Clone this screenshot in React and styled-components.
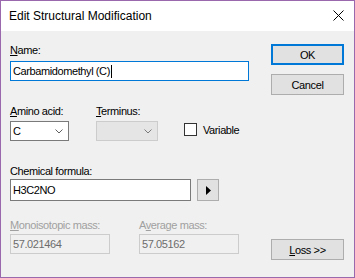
import React from "react";
import styled, { createGlobalStyle } from "styled-components";

const Global = createGlobalStyle`
  html, body { margin: 0; padding: 0; background: #ffffff; }
  * { box-sizing: border-box; }
`;

const Window = styled.div`
  width: 355px;
  height: 278px;
  border: 1px solid #9a68ad;
  display: flex;
  flex-direction: column;
  font-family: "Liberation Sans", Arial, sans-serif;
  font-size: 11px;
  letter-spacing: -0.4px;
  color: #000;
  overflow: hidden;
`;

const TitleBar = styled.div`
  height: 30px;
  flex: none;
  background: #ffffff;
  display: flex;
  align-items: center;
  justify-content: space-between;
  padding: 0 10px 1px 8px;
`;

const Title = styled.span`
  font-size: 12px;
  letter-spacing: 0;
  color: #000;
`;

const Body = styled.div`
  flex: 1;
  background: #f0f0f0;
  display: flex;
  padding: 0 10px 17px 9px;
`;

const Form = styled.div`
  width: 239px;
  display: flex;
  flex-direction: column;
`;

const Side = styled.div`
  margin-left: auto;
  width: 73px;
  display: flex;
  flex-direction: column;
  padding-top: 13px;
`;

const Label = styled.div`
  line-height: 15px;
  height: 15px;
  white-space: nowrap;
  margin-top: ${(p) => p.$top || 0}px;
  margin-bottom: ${(p) => p.$bottom || 0}px;
  color: ${(p) => (p.$disabled ? "#a0a0a0" : "#000")};
`;

const TextBox = styled.div`
  width: ${(p) => p.$w}px;
  height: ${(p) => p.$h || 20}px;
  border: 1px solid ${(p) => (p.$focus ? "#0078d7" : p.$disabled ? "#cccccc" : "#7a7a7a")};
  background: ${(p) => (p.$disabled ? "#f0f0f0" : "#ffffff")};
  color: ${(p) => (p.$disabled ? "#6d6d6d" : "#000")};
  display: flex;
  align-items: center;
  padding-left: 2px;
  white-space: nowrap;
`;

const Caret = styled.span`
  display: inline-block;
  width: 1px;
  height: 13px;
  background: #000;
  margin-left: 1px;
`;

const Row = styled.div`
  display: flex;
  align-items: ${(p) => p.$align || "flex-start"};
`;

const Field = styled.div`
  display: flex;
  flex-direction: column;
  margin-left: ${(p) => p.$ml || 0}px;
`;

const Select = styled.div`
  width: ${(p) => p.$w}px;
  height: 20px;
  margin-top: 2px;
  border: 1px solid ${(p) => (p.$disabled ? "#cccccc" : "#7a7a7a")};
  background: ${(p) => (p.$disabled ? "#e5e5e5" : "#ffffff")};
  display: flex;
  align-items: center;
  justify-content: space-between;
  padding: 0 5px 0 2px;
`;

const CheckGroup = styled.label`
  display: flex;
  align-items: center;
  margin-left: 26px;
  margin-bottom: 5px;
  gap: 6px;
`;

const Box = styled.span`
  width: 13px;
  height: 13px;
  border: 1px solid #333333;
  background: #ffffff;
`;

const Button = styled.div`
  height: ${(p) => p.$h || 21}px;
  width: ${(p) => p.$w || 73}px;
  border: ${(p) => (p.$default ? "2px solid #0078d7" : "1px solid #adadad")};
  background: #e1e1e1;
  display: flex;
  align-items: center;
  justify-content: center;
  margin-top: ${(p) => (p.$pushDown ? "auto" : `${p.$top || 0}px`)};
  margin-left: ${(p) => p.$ml || 0}px;
  flex: none;
`;

const Chevron = ({ color }) => (
  <svg width="8" height="5" viewBox="0 0 8 5">
    <polyline points="0.5,0.5 4,4 7.5,0.5" fill="none" stroke={color} strokeWidth="1" />
  </svg>
);

const CloseIcon = () => (
  <svg width="11" height="11" viewBox="0 0 11 11">
    <path d="M0.5 0.5 L10.5 10.5 M10.5 0.5 L0.5 10.5" stroke="#000" strokeWidth="1" fill="none" />
  </svg>
);

const Play = () => (
  <svg width="5" height="9" viewBox="0 0 5 9">
    <polygon points="0,0 5,4.5 0,9" fill="#000" />
  </svg>
);

export default function App() {
  return (
    <>
      <Global />
      <Window>
        <TitleBar>
          <Title>Edit Structural Modification</Title>
          <CloseIcon />
        </TitleBar>
        <Body>
          <Form>
            <Label $top={12} $bottom={3}>
              <u>N</u>ame:
            </Label>
            <TextBox $w={239} $focus>
              Carbamidomethyl (C)
              <Caret />
            </TextBox>

            <Row $align="flex-end">
              <Field>
                <Label $top={23}>
                  <u>A</u>mino acid:
                </Label>
                <Select $w={59}>
                  <span>C</span>
                  <Chevron color="#606060" />
                </Select>
              </Field>
              <Field $ml={27}>
                <Label $top={23}>
                  <u>T</u>erminus:
                </Label>
                <Select $w={62} $disabled>
                  <span />
                  <Chevron color="#7a7a7a" />
                </Select>
              </Field>
              <CheckGroup>
                <Box />
                <span>Variable</span>
              </CheckGroup>
            </Row>

            <Label $top={23}>Chemical formula:</Label>
            <Row>
              <TextBox $w={181} $h={22}>
                H3C2NO
              </TextBox>
              <Button $w={22} $h={22} $ml={6}>
                <Play />
              </Button>
            </Row>

            <Row>
              <Field>
                <Label $top={17} $bottom={1} $disabled>
                  <u>M</u>onoisotopic mass:
                </Label>
                <TextBox $w={100} $disabled>
                  57.021464
                </TextBox>
              </Field>
              <Field $ml={29}>
                <Label $top={17} $bottom={1} $disabled>
                  A<u>v</u>erage mass:
                </Label>
                <TextBox $w={100} $disabled>
                  57.05162
                </TextBox>
              </Field>
            </Row>
          </Form>
          <Side>
            <Button $default>OK</Button>
            <Button $top={9}>Cancel</Button>
            <Button $pushDown>
              <span>
                <u>L</u>oss &gt;&gt;
              </span>
            </Button>
          </Side>
        </Body>
      </Window>
    </>
  );
}
